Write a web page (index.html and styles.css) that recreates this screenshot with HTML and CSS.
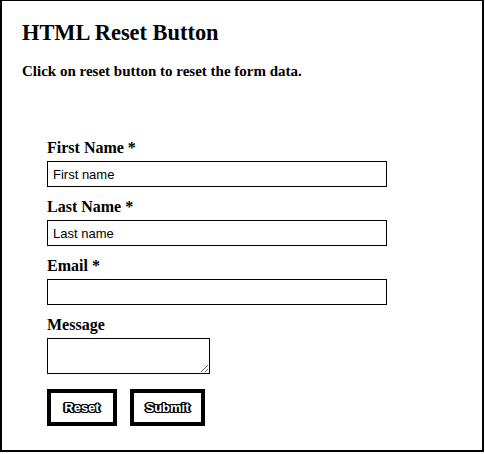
FILE: index.html
```html
<!DOCTYPE html>
<html lang="en">
<head>
<meta charset="utf-8">
<title>HTML Reset Button</title>
<link rel="stylesheet" href="styles.css">
</head>
<body>
<div class="frame">
  <h2 class="title">HTML Reset Button</h2>
  <p class="intro">Click on reset button to reset the form data.</p>
  <form class="form">
    <label class="label" for="fname">First Name *</label>
    <input class="field" id="fname" type="text" placeholder="First name">
    <label class="label" for="lname">Last Name *</label>
    <input class="field" id="lname" type="text" placeholder="Last name">
    <label class="label" for="email">Email *</label>
    <input class="field" id="email" type="email">
    <label class="label" for="msg">Message</label>
    <textarea class="message" id="msg"></textarea>
    <div class="actions">
      <button class="btn btn-reset" type="reset">Reset</button>
      <button class="btn btn-submit" type="submit">Submit</button>
    </div>
  </form>
</div>
</body>
</html>
```

FILE: styles.css
```css
html, body {
  margin: 0;
  padding: 0;
  background: #fff;
}

.frame {
  box-sizing: border-box;
  width: 484px;
  height: 453px;
  margin-top: -1px;
  border: 2px solid #000;
  padding: 19px 0 0 20px;
  font-family: "Liberation Serif", "Times New Roman", serif;
  color: #000;
}

.title {
  margin: 0;
  font-size: 22.4px;
  line-height: 25px;
  font-weight: bold;
}

.intro {
  margin: 18px 0 0;
  font-size: 15px;
  line-height: 17px;
  font-weight: bold;
}

.form {
  display: flex;
  flex-direction: column;
  align-items: flex-start;
  margin: 59px 0 0 25px;
}

.label {
  font-size: 16px;
  line-height: 18px;
  font-weight: bold;
  margin-bottom: 4px;
}

.field {
  box-sizing: border-box;
  width: 340px;
  height: 26px;
  margin: 0 0 11px;
  padding: 0 5px;
  border: 1px solid #000;
  border-radius: 0;
  background: #fff;
  font-family: "Liberation Sans", Arial, sans-serif;
  font-size: 13px;
  color: #000;
  outline: none;
}

.field::placeholder {
  color: #000;
  opacity: 1;
}

.message {
  box-sizing: border-box;
  display: block;
  width: 163px;
  height: 36px;
  margin: 0;
  padding: 2px;
  border: 1px solid #000;
  border-radius: 0;
  background: #fff;
  font-family: "Liberation Mono", monospace;
  font-size: 13px;
}

.actions {
  display: flex;
  gap: 13px;
  margin-top: 15px;
}

.btn {
  box-sizing: border-box;
  height: 37px;
  padding: 0;
  border: 4px solid #000;
  border-radius: 0;
  background: #fff;
  font-family: "Liberation Sans", Arial, sans-serif;
  font-size: 13px;
  font-weight: bold;
  color: #fff;
  text-shadow:
    1px 0 0 #000, -1px 0 0 #000, 0 1px 0 #000, 0 -1px 0 #000,
    1px 1px 0 #000, -1px -1px 0 #000, 1px -1px 0 #000, -1px 1px 0 #000,
    2px 0 0 #000, -2px 0 0 #000;
  cursor: pointer;
}

.btn-reset {
  width: 70px;
}

.btn-submit {
  width: 75px;
}
```
